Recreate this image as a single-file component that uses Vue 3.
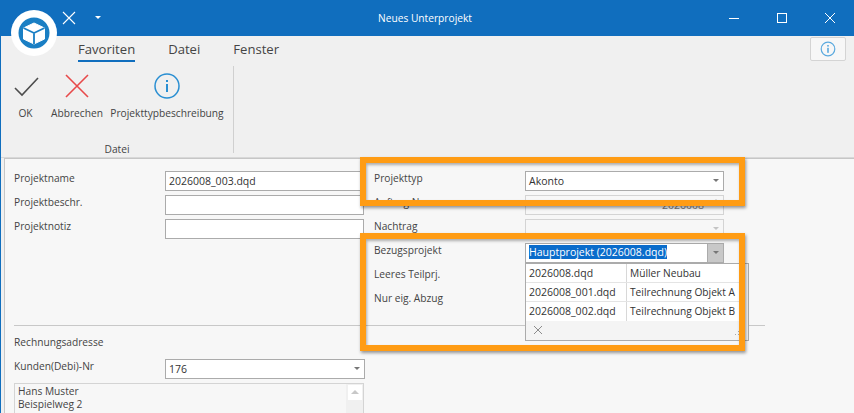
<template>
  <div class="window">
    <header class="titlebar">
      <div class="quick">
        <svg class="quick-x" width="14" height="14" viewBox="0 0 14 14"><path d="M1 1l12 12M13 1L1 13" stroke="#fff" stroke-width="1.1" fill="none" /></svg>
        <span class="quick-caret"></span>
      </div>
      <span class="title">Neues Unterprojekt</span>
      <div class="win-buttons">
        <svg width="12" height="12" viewBox="0 0 12 12"><path d="M1 6.5h10" stroke="#fff" stroke-width="1" fill="none" /></svg>
        <svg width="12" height="12" viewBox="0 0 12 12"><rect x="1.5" y="1.5" width="9" height="9" stroke="#fff" stroke-width="1" fill="none" /></svg>
        <svg width="12" height="12" viewBox="0 0 12 12"><path d="M1 1l10 10M11 1L1 11" stroke="#fff" stroke-width="1" fill="none" /></svg>
      </div>
    </header>

    <div class="app-logo">
      <svg width="32" height="32" viewBox="0 0 32 32">
        <circle cx="16" cy="16" r="15.5" fill="#1a7fc4" />
        <path d="M16 6l10.5 5v11l-10.5 5-10.5-5V11z" fill="#fff" stroke="#fff" stroke-width="1" stroke-linejoin="round" />
        <path d="M16 16l10.5-5M16 16L5.5 11M16 16v11" stroke="#1a7fc4" stroke-width="1.8" fill="none" />
      </svg>
    </div>

    <nav class="tabs">
      <span v-for="tab in tabs" :key="tab" :class="['tab', { active: tab === 'Favoriten' }]">{{ tab }}</span>
      <button class="help-btn">
        <svg width="16" height="16" viewBox="0 0 16 16">
          <circle cx="8" cy="8" r="6.8" fill="none" stroke="#5aa9de" stroke-width="1.2" />
          <rect x="7.2" y="6.8" width="1.6" height="5" fill="#5aa9de" />
          <rect x="7.2" y="4" width="1.6" height="1.6" fill="#5aa9de" />
        </svg>
      </button>
    </nav>

    <section class="ribbon">
      <div class="ribbon-group">
        <div class="ribbon-items">
          <div class="ribbon-item ok">
            <svg width="26" height="26" viewBox="0 0 26 26"><path d="M2 15l7 7L25 5" stroke="#4d4d4d" stroke-width="1.6" fill="none" /></svg>
            <span>OK</span>
          </div>
          <div class="ribbon-item cancel">
            <svg width="26" height="26" viewBox="0 0 26 26"><path d="M2 2l22 22M24 2L2 24" stroke="#e8494a" stroke-width="1.6" fill="none" /></svg>
            <span>Abbrechen</span>
          </div>
          <div class="ribbon-item info">
            <svg width="26" height="26" viewBox="0 0 26 26">
              <circle cx="13" cy="13" r="12" fill="none" stroke="#2a8fd2" stroke-width="1.5" />
              <rect x="12" y="11" width="2" height="8" fill="#2a8fd2" />
              <rect x="12" y="7" width="2" height="2" fill="#2a8fd2" />
            </svg>
            <span>Projekttypbeschreibung</span>
          </div>
        </div>
        <div class="group-name">Datei</div>
      </div>
    </section>

    <main class="panel">
      <div class="form-top">
        <div class="form-col">
          <div class="row">
            <label>Projektname</label>
            <div class="field">2026008_003.dqd</div>
          </div>
          <div class="row">
            <label>Projektbeschr.</label>
            <div class="field"></div>
          </div>
          <div class="row">
            <label>Projektnotiz</label>
            <div class="field"></div>
          </div>
        </div>

        <div class="form-col">
          <div class="row">
            <label>Projekttyp</label>
            <div class="field combo">Akonto<i class="caret"></i></div>
          </div>
          <div class="row">
            <label>Auftrag Nr</label>
            <div class="field combo disabled number">2026008<i class="spin"></i></div>
          </div>
          <div class="row">
            <label>Nachtrag</label>
            <div class="field combo disabled"><i class="caret"></i></div>
          </div>
          <div class="row">
            <label>Bezugsprojekt</label>
            <div class="field combo open">
              <span class="selected">Hauptprojekt (2026008.dqd)</span>
              <b class="drop-btn"><i class="caret"></i></b>
              <div class="popup">
                <div v-for="p in projects" :key="p.file" class="popup-row">
                  <span class="cell-file">{{ p.file }}</span>
                  <span class="cell-name">{{ p.name }}</span>
                </div>
                <div class="popup-foot">
                  <svg width="10" height="10" viewBox="0 0 10 10"><path d="M1 1l8 8M9 1L1 9" stroke="#8c8c8c" stroke-width="1" fill="none" /></svg>
                  <svg class="grip" width="5" height="5" viewBox="0 0 5 5">
                    <rect x="3" y="0" width="1" height="1" fill="#a8a8a8" />
                    <rect x="0" y="3" width="1" height="1" fill="#a8a8a8" />
                    <rect x="3" y="3" width="1" height="1" fill="#a8a8a8" />
                  </svg>
                </div>
              </div>
            </div>
          </div>
          <div class="row">
            <label>Leeres Teilprj.</label>
          </div>
          <div class="row">
            <label>Nur eig. Abzug</label>
          </div>
        </div>
      </div>

      <hr class="divider" />

      <div class="billing">
        <div class="billing-title">Rechnungsadresse</div>
        <div class="row">
          <label>Kunden(Debi)-Nr</label>
          <div class="field combo">176<i class="caret"></i></div>
        </div>
        <div class="address">
          <div class="address-text">Hans Muster<br />Beispielweg 2</div>
          <div class="scrollbar"><span class="scroll-up"></span></div>
        </div>
      </div>

      <div class="callout callout-top"></div>
      <div class="callout callout-bottom"></div>
    </main>
  </div>
</template>

<script setup>
const tabs = ['Favoriten', 'Datei', 'Fenster']

const projects = [
  { file: '2026008.dqd', name: 'Müller Neubau' },
  { file: '2026008_001.dqd', name: 'Teilrechnung Objekt A' },
  { file: '2026008_002.dqd', name: 'Teilrechnung Objekt B' }
]
</script>

<style>
html,
body {
  margin: 0;
  overflow: hidden;
}
</style>

<style scoped>
.window {
  position: relative;
  width: 854px;
  height: 413px;
  overflow: hidden;
  box-sizing: border-box;
  border-left: 1px solid #106ebe;
  background: #f0f0f0;
  font-family: "Open Sans", "Noto Sans", sans-serif;
  font-size: 10.2px;
  color: #444;
}

.titlebar {
  height: 36px;
  margin-left: -1px;
  background: #106ebe;
  display: flex;
  align-items: center;
  position: relative;
  color: #fff;
}

.quick {
  display: flex;
  align-items: center;
  margin-left: 62px;
  gap: 19px;
}

.quick-x {
  margin-top: -1px;
}

.quick-caret {
  width: 0;
  height: 0;
  margin-top: -1px;
  border-left: 3px solid transparent;
  border-right: 3px solid transparent;
  border-top: 3px solid #fff;
}

.title {
  position: absolute;
  left: 0;
  right: 4px;
  top: 11px;
  text-align: center;
  font-size: 10.2px;
}

.win-buttons {
  margin-left: auto;
  display: flex;
  gap: 36px;
  margin-right: 18px;
  margin-top: -1px;
}

.app-logo {
  position: absolute;
  left: 10px;
  top: 10px;
  width: 46px;
  height: 46px;
  border-radius: 50%;
  background: #fff;
  display: flex;
  align-items: center;
  justify-content: center;
}

.tabs {
  height: 28px;
  display: flex;
  gap: 33px;
  padding-left: 77px;
  position: relative;
}

.tab {
  font-size: 13.1px;
  line-height: 19px;
  margin-top: 4px;
  height: 22px;
  box-sizing: border-box;
  color: #444;
}

.tab.active {
  border-bottom: 2px solid #106ebe;
}

.help-btn {
  position: absolute;
  right: 8px;
  top: 1px;
  width: 36px;
  height: 24px;
  padding: 0;
  box-sizing: border-box;
  border: 1px solid #d4d4d4;
  border-radius: 2px;
  background: #f7f7f7;
  display: flex;
  align-items: center;
  justify-content: center;
}

.ribbon {
  height: 94px;
  padding-top: 2px;
  border-bottom: 1px solid #d8d8d8;
  box-sizing: border-box;
}

.ribbon-group {
  width: 232px;
  height: 87px;
  border-right: 1px solid #d0d0d0;
  display: flex;
  flex-direction: column;
}

.ribbon-items {
  display: flex;
  flex: 1;
}

.ribbon-item {
  display: flex;
  flex-direction: column;
  align-items: center;
  gap: 7px;
  padding-top: 7px;
}

.ribbon-item span {
  line-height: 14px;
  white-space: nowrap;
}

.ok {
  width: 49px;
}

.cancel {
  width: 54px;
}

.info {
  width: 126px;
}

.group-name {
  text-align: center;
  line-height: 14px;
  margin-bottom: -3px;
}

.panel {
  position: relative;
  height: 255px;
  margin-left: 3px;
  box-sizing: border-box;
  border: 1px solid #c6c6c6;
  border-right: none;
  border-bottom: none;
  background: #f7f7f7;
  padding: 12px 0 0 9px;
}

.form-top {
  display: flex;
  gap: 10px;
  height: 154px;
}

.form-col {
  width: 350px;
  display: flex;
  flex-direction: column;
}

.row {
  display: flex;
  height: 20px;
  margin-bottom: 4px;
  flex-shrink: 0;
}

.row label {
  width: 151px;
  flex-shrink: 0;
  line-height: 14px;
}

.field {
  position: relative;
  width: 200px;
  height: 20px;
  box-sizing: border-box;
  border: 1px solid #ababab;
  background: #fff;
  padding-left: 3px;
  font-size: 10.5px;
  line-height: 18px;
  color: #333;
}

.caret {
  position: absolute;
  right: 4px;
  top: 7px;
  width: 0;
  height: 0;
  border-left: 3.5px solid transparent;
  border-right: 3.5px solid transparent;
  border-top: 3.5px solid #777;
}

.disabled {
  border-color: #d4d4d4;
  background: #f7f7f7;
  color: #777;
}

.disabled .caret {
  border-top-color: #c4c4c4;
}

.number {
  text-align: right;
  padding-right: 19px;
}

.spin {
  position: absolute;
  right: 4px;
  top: 3px;
  width: 0;
  height: 0;
  border-left: 3.5px solid transparent;
  border-right: 3.5px solid transparent;
  border-bottom: 3.5px solid #c4c4c4;
}

.selected {
  background: #0a6ccb;
  color: #fff;
  display: inline-block;
  line-height: 14px;
  vertical-align: 1px;
}

.drop-btn {
  position: absolute;
  right: 0;
  top: 0;
  width: 15px;
  height: 18px;
  background: #c8c8c8;
  border-left: 1px solid #ababab;
}

.popup {
  position: absolute;
  left: -1px;
  top: 19px;
  width: 224px;
  height: 78px;
  box-sizing: border-box;
  border: 1px solid #ababab;
  background: #f4f4f4;
  z-index: 2;
}

.popup-row {
  display: flex;
  width: 219px;
  height: 19px;
  background: #fff;
  border-bottom: 1px solid #e4e4e4;
  line-height: 18px;
  box-sizing: border-box;
}

.popup-row:nth-child(3) {
  border-bottom: none;
}

.cell-file {
  width: 101px;
  padding-left: 3px;
  box-sizing: border-box;
  border-right: 1px solid #d8d8d8;
}

.cell-name {
  padding-left: 3px;
  white-space: nowrap;
  font-size: 10.2px;
}

.popup-foot {
  display: flex;
  align-items: center;
  height: 18px;
  padding-left: 7px;
}

.grip {
  margin-left: 192px;
  align-self: flex-end;
  margin-bottom: 3px;
}

.divider {
  margin: 0;
  width: 751px;
  border: none;
  border-top: 1px solid #c8c8c8;
}

.billing-title {
  margin-top: 9px;
  margin-bottom: 10px;
  line-height: 14px;
}

.address {
  width: 350px;
  height: 60px;
  box-sizing: border-box;
  border: 1px solid #d4d4d4;
  display: flex;
  justify-content: space-between;
}

.address-text {
  padding: 1px 3px;
  line-height: 13px;
  color: #444;
}

.scrollbar {
  width: 17px;
  background: #f0f0f0;
  display: flex;
  justify-content: center;
}

.scroll-up {
  width: 14px;
  height: 15px;
  margin-top: 1px;
  background: #fff;
  position: relative;
}

.scroll-up::after {
  content: "";
  position: absolute;
  left: 3px;
  top: 5px;
  border-left: 4px solid transparent;
  border-right: 4px solid transparent;
  border-bottom: 4px solid #c8c8c8;
}

.callout {
  position: absolute;
  box-sizing: border-box;
  left: 355px;
  width: 385px;
  border: 6px solid #ff9c14;
  box-shadow: 1px 2px 3px rgba(0, 0, 0, 0.4), inset 1px 2px 3px rgba(0, 0, 0, 0.3);
  z-index: 5;
}

.callout-top {
  top: -2px;
  height: 49px;
}

.callout-bottom {
  top: 74px;
  height: 118px;
}
</style>
